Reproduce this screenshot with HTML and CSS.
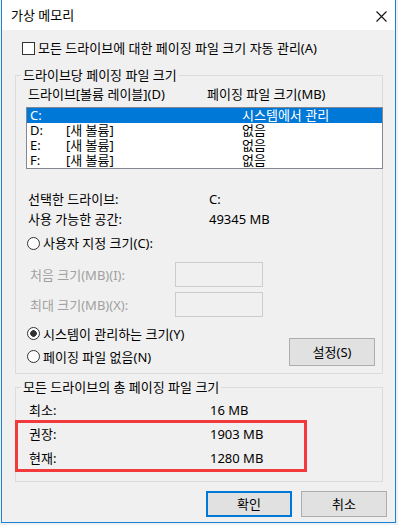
FILE: index.html
```html
<!DOCTYPE html>
<html lang="ko">

<head>
  <meta charset="UTF-8">
  <meta name="viewport" content="width=device-width, initial-scale=1.0">
  <title>가상 메모리</title>
  <link rel="stylesheet" href="styles.css">
</head>

<body>

  <div class="window">
    <div class="titlebar">
      <span class="title">가상 메모리</span>
      <svg class="close" width="11" height="11" viewBox="0 0 11 11">
        <path d="M0.5 0.5L10.5 10.5M10.5 0.5L0.5 10.5" stroke="#111" stroke-width="1.1" fill="none" />
      </svg>
    </div>

    <div class="content">
      <label class="check"><span class="checkbox"></span>모든 드라이브에 대한 페이징 파일 크기 자동 관리(A)</label>

      <fieldset class="group group-drive">
        <legend>드라이브당 페이징 파일 크기</legend>
        <div class="list-head">
          <span class="col-drive">드라이브[볼륨 레이블](D)</span>
          <span>페이징 파일 크기(MB)</span>
        </div>
        <div class="drive-list">
          <div class="drive selected"><span class="letter">C:</span><span class="label"></span><span>시스템에서 관리</span></div>
          <div class="drive"><span class="letter">D:</span><span class="label">[새 볼륨]</span><span>없음</span></div>
          <div class="drive"><span class="letter">E:</span><span class="label">[새 볼륨]</span><span>없음</span></div>
          <div class="drive"><span class="letter">F:</span><span class="label">[새 볼륨]</span><span>없음</span></div>
        </div>

        <div class="info">
          <div class="info-row"><span class="key">선택한 드라이브:</span><span>C:</span></div>
          <div class="info-row"><span class="key">사용 가능한 공간:</span><span>49345 MB</span></div>
        </div>

        <label class="radio-row custom"><span class="radio"></span>사용자 지정 크기(C):</label>
        <div class="size-row first"><span class="size-label">처음 크기(MB)(I):</span><span class="textbox"></span></div>
        <div class="size-row"><span class="size-label">최대 크기(MB)(X):</span><span class="textbox"></span></div>

        <div class="choice-row">
          <div class="choices">
            <label class="radio-row"><span class="radio checked"></span>시스템이 관리하는 크기(Y)</label>
            <label class="radio-row"><span class="radio"></span>페이징 파일 없음(N)</label>
          </div>
          <button class="btn btn-set">설정(S)</button>
        </div>
      </fieldset>

      <fieldset class="group group-total">
        <legend>모든 드라이브의 총 페이징 파일 크기</legend>
        <div class="totals">
          <div class="total-row"><span class="key">최소:</span><span>16 MB</span></div>
          <div class="marked">
            <div class="total-row"><span class="key">권장:</span><span>1903 MB</span></div>
            <div class="total-row"><span class="key">현재:</span><span>1280 MB</span></div>
          </div>
        </div>
      </fieldset>

      <div class="actions">
        <button class="btn btn-default">확인</button>
        <button class="btn">취소</button>
      </div>
    </div>
  </div>

</body>

</html>
```

FILE: styles.css
```css
html {
  background-color: #f0f0f0;
}

body {
  margin: 0;
  font-family: "Noto Sans", "Noto Sans CJK KR", sans-serif;
  font-size: 13px;
  line-height: 16px;
  color: #000;
}

.window {
  margin-left: 1px;
  width: 393px;
  border: 1px solid #1883d7;
  border-top: 0;
  background-color: #f0f0f0;
}

.titlebar {
  height: 30px;
  display: flex;
  align-items: center;
  justify-content: space-between;
  padding: 0 8px 0 9px;
  background-color: #fff;
}

.close {
  margin-top: 2px;
}

.content {
  padding: 0 8px 5px 13px;
}

/* checkbox + radio */
.check {
  display: flex;
  align-items: center;
  gap: 3px;
  height: 20px;
  margin: 8px 0 0 7px;
}

.checkbox {
  width: 13px;
  height: 13px;
  box-sizing: border-box;
  border: 1px solid #333;
  background-color: #fff;
}

.radio-row {
  display: flex;
  align-items: center;
  gap: 3px;
  height: 20px;
  padding-left: 11px;
}

.radio {
  width: 13px;
  height: 13px;
  box-sizing: border-box;
  border: 1px solid #333;
  border-radius: 50%;
  background-color: #fff;
}

.radio.checked {
  background: radial-gradient(circle, #333 0 3px, #fff 3.6px);
}

/* group boxes */
.group {
  margin: 9px 4px 0 0;
  padding: 0;
  border: 1px solid #dcdcdc;
  min-width: 0;
}

.group legend {
  margin-left: 5px;
  padding: 0 2px;
  height: 16px;
  line-height: 16px;
}

.list-head {
  display: flex;
  align-items: center;
  height: 16px;
  margin-top: 3px;
  padding-left: 12px;
}

.col-drive {
  width: 179px;
}

.drive-list {
  margin: 5px -1px 0 10px;
  border: 1px solid #828790;
  background-color: #fff;
}

.drive {
  display: flex;
  align-items: center;
  height: 15px;
  line-height: 15px;
  padding-left: 3px;
}

.drive.selected {
  background-color: #0078d7;
  color: #fff;
}

.drive .letter {
  width: 36px;
}

.drive .label {
  width: 176px;
}

.info {
  margin-top: 20px;
}

.info-row {
  display: flex;
  align-items: center;
  height: 20px;
  padding-left: 12px;
}

.info-row .key {
  width: 181px;
}

.custom {
  margin-top: 4px;
}

.size-row {
  display: flex;
  align-items: center;
  height: 25px;
  margin-top: 5px;
  padding-left: 14px;
  color: #a0a0a0;
}

.size-row.first {
  margin-top: 9px;
}

.size-label {
  width: 145px;
}

.textbox {
  width: 88px;
  height: 25px;
  box-sizing: border-box;
  border: 1px solid #cccccc;
}

.choice-row {
  display: flex;
  align-items: flex-end;
  justify-content: space-between;
  margin-top: 5px;
  padding: 0 7px 5px 0;
}

.choices .radio-row {
  height: 23px;
}

/* totals */
.group-total {
  margin-top: 5px;
}

.totals {
  margin-top: 3px;
  padding-bottom: 11px;
}

.total-row {
  display: flex;
  align-items: center;
  height: 24px;
  padding-left: 13px;
}

.total-row .key {
  width: 181px;
}

.marked {
  position: relative;
}

.marked::after {
  content: "";
  position: absolute;
  left: -1px;
  top: -2px;
  width: 292px;
  height: 52px;
  box-sizing: border-box;
  border: 3px solid #f2393b;
}

/* buttons */
.btn {
  font: inherit;
  color: #000;
  padding: 0;
  background-color: #e1e1e1;
  border: 1px solid #adadad;
}

.btn-set {
  width: 86px;
  height: 28px;
  margin-bottom: 2px;
}

.actions {
  display: flex;
  justify-content: flex-end;
  gap: 9px;
  margin-top: 9px;
}

.actions .btn {
  width: 86px;
  height: 26px;
}

.btn-default {
  border: 2px solid #0078d7;
}
```
